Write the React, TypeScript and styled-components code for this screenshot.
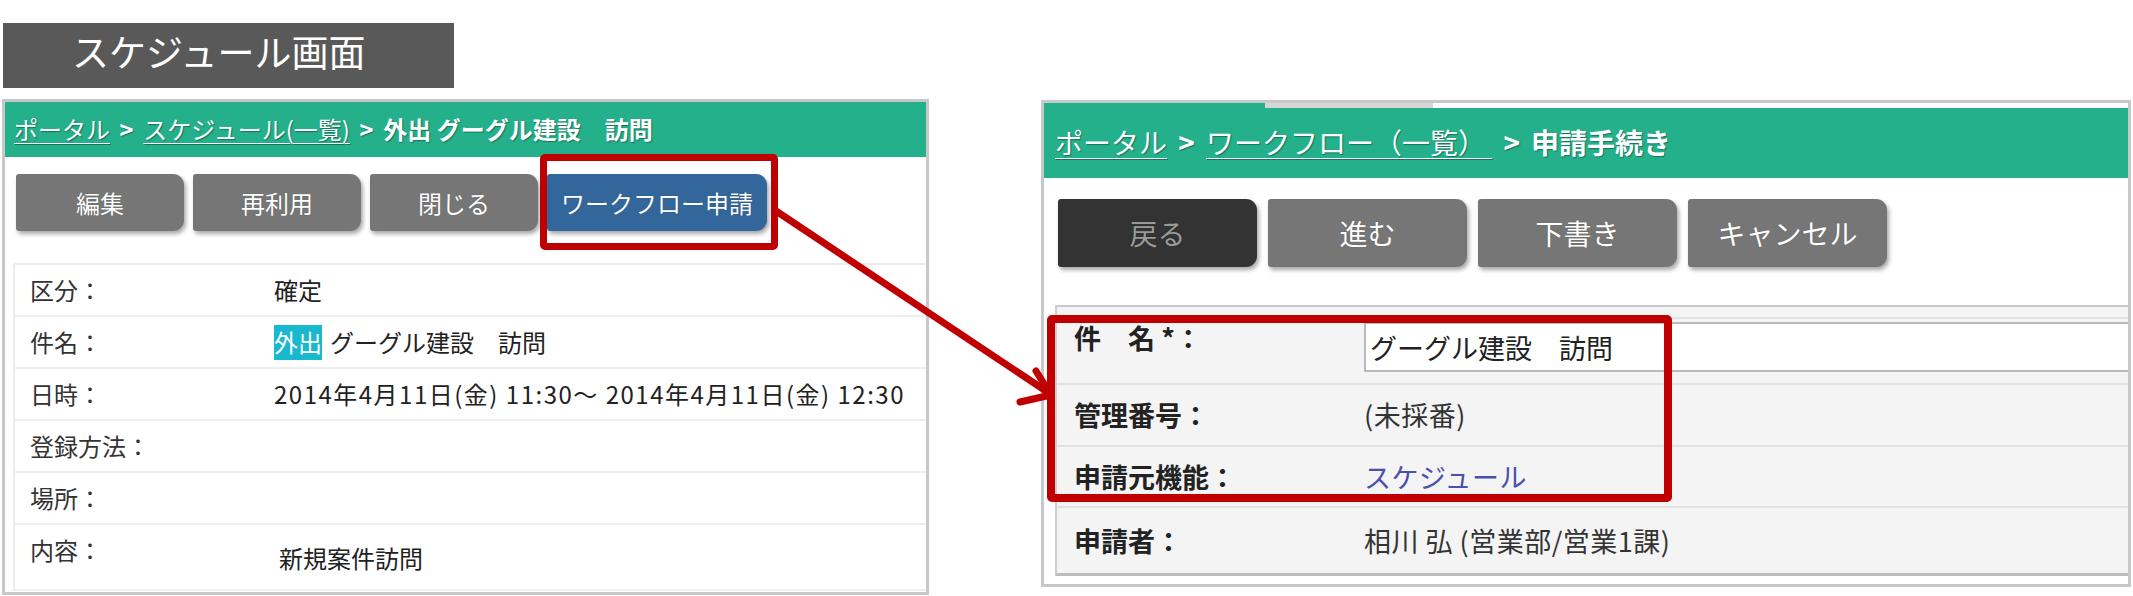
import React from 'react';
import styled, { createGlobalStyle } from 'styled-components';

const GlobalStyle = createGlobalStyle`
  html, body {
    margin: 0;
    padding: 0;
    background: #ffffff;
  }
  body {
    font-family: "Noto Sans CJK JP", "Noto Sans", sans-serif;
    color: #333;
  }
  * {
    box-sizing: border-box;
  }
`;

const Page = styled.div`
  position: relative;
  width: 2133px;
  height: 596px;
  overflow: hidden;
  display: flex;
  align-items: flex-start;
  padding-left: 2px;
  gap: 112px;
`;

const LeftColumn = styled.div`
  display: flex;
  flex-direction: column;
  gap: 11px;
  padding-top: 23px;
`;

const Title = styled.div`
  width: 451px;
  height: 65px;
  margin-left: 1px;
  background: #595959;
  color: #fff;
  font-size: 37px;
  line-height: 1;
  display: flex;
  align-items: center;
  padding: 0 0 8px 69px;
`;

const Panel = styled.section<{ $w: number; $h: number; $top?: number }>`
  width: ${p => p.$w}px;
  height: ${p => p.$h}px;
  margin-top: ${p => p.$top || 0}px;
  border: 3px solid #c8c8c8;
  background: #fff;
  display: flex;
  flex-direction: column;
  overflow: hidden;
`;

// 緑のパンくずヘッダー
const Header = styled.header<{ $h: number }>`
  height: ${p => p.$h}px;
  flex: none;
  background: #23b08a;
  display: flex;
  flex-direction: column;
`;

const TabStrip = styled.div`
  display: flex;
  height: 5px;
  flex: none;
`;

const TabPiece = styled.div<{ $w?: number; $bg: string }>`
  width: ${p => (p.$w ? `${p.$w}px` : 'auto')};
  flex: ${p => (p.$w ? 'none' : '1')};
  background: ${p => p.$bg};
`;

const Crumbs = styled.div<{ $size: number; $pad: number }>`
  flex: 1;
  display: flex;
  align-items: center;
  padding-left: ${p => p.$pad}px;
  font-size: ${p => p.$size}px;
  line-height: 1.2;
  color: #fff;
  white-space: nowrap;
  text-shadow: 1px 1px 1px rgba(0, 0, 0, 0.35);
`;

const CrumbLink = styled.a`
  color: #fff;
  text-decoration: underline;
  text-decoration-thickness: 1px;
  text-underline-offset: 4px;
`;

const CrumbSep = styled.span`
  font-weight: 700;
  margin: 0 0.4em;
`;

const CrumbCurrent = styled.span`
  font-weight: 700;
`;

const Buttons = styled.div<{ $gap: number; $pad: string }>`
  display: flex;
  gap: ${p => p.$gap}px;
  padding: ${p => p.$pad};
  flex: none;
`;

type Tone = 'gray' | 'blue' | 'dark';

const toneBg: Record<Tone, string> = {
  gray: '#767676',
  blue: '#33669a',
  dark: '#333333',
};

const Btn = styled.button<{ $tone: Tone; $w: number; $h: number; $size: number }>`
  width: ${p => p.$w}px;
  height: ${p => p.$h}px;
  border: none;
  border-radius: 3px 11px 11px 3px;
  background: ${p => toneBg[p.$tone]};
  color: ${p => (p.$tone === 'dark' ? '#9a9a9a' : '#fff')};
  font-family: inherit;
  font-size: ${p => p.$size}px;
  line-height: 1;
  padding: 0;
  display: flex;
  align-items: center;
  justify-content: center;
  box-shadow: 2px 3px 4px rgba(0, 0, 0, 0.35);
  text-shadow: 0 0 1px rgba(0, 0, 0, 0.3);
`;

// スケジュール詳細テーブル
const InfoTable = styled.div`
  margin: 32px 0 0 8px;
  border-top: 2px solid #ececec;
  border-left: 2px solid #ececec;
`;

const InfoRow = styled.div<{ $h: number; $top?: boolean }>`
  height: ${p => p.$h}px;
  display: flex;
  align-items: ${p => (p.$top ? 'flex-start' : 'center')};
  border-bottom: 2px solid #efefef;
  font-size: 24px;
  line-height: 34px;
`;

const InfoLabel = styled.div<{ $pt?: number }>`
  width: 259px;
  flex: none;
  padding-left: 15px;
  padding-top: ${p => p.$pt || 0}px;
  color: #333;
`;

const InfoValue = styled.div<{ $pt?: number; $ml?: number; $ls?: number }>`
  display: flex;
  align-items: center;
  gap: 8px;
  color: #222;
  padding-top: ${p => p.$pt || 0}px;
  margin-left: ${p => p.$ml || 0}px;
  letter-spacing: ${p => p.$ls || 0}px;
  white-space: nowrap;
`;

const Tag = styled.span`
  background: #18b8cf;
  color: #fff;
  height: 35px;
  display: inline-flex;
  align-items: center;
  line-height: 1;
`;

// 申請フォーム
const FormTable = styled.div`
  margin: 38px 0 0 11px;
  border-top: 2px solid #c9c9c9;
  border-left: 2px solid #cfcfcf;
  border-bottom: 3px solid #bdbdbd;
  background: #f4f4f4;
`;

const FormCap = styled.div`
  height: 12px;
  border-bottom: 2px solid #e2e2e2;
`;

const FormRow = styled.div<{ $h: number; $top?: boolean; $last?: boolean }>`
  height: ${p => p.$h}px;
  display: flex;
  align-items: ${p => (p.$top ? 'flex-start' : 'center')};
  border-bottom: ${p => (p.$last ? 'none' : '2px solid #e2e2e2')};
  font-size: 27px;
  line-height: 34px;
`;

const FormLabel = styled.div<{ $pt?: number }>`
  width: 307px;
  flex: none;
  padding-left: 17px;
  padding-top: ${p => p.$pt || 0}px;
  font-weight: 700;
  color: #222;
`;

const FormValue = styled.div<{ $link?: boolean }>`
  color: ${p => (p.$link ? '#4b4fae' : '#333')};
  letter-spacing: 0.5px;
  white-space: nowrap;
`;

const TextInput = styled.input`
  flex: 1;
  height: 50px;
  margin-top: 3px;
  border: 2px solid #b9b9b9;
  border-right: none;
  background: #fff;
  font-family: inherit;
  font-size: 27px;
  color: #222;
  padding: 0 0 0 4px;
  outline: none;
`;

// 注釈（赤枠と矢印）
const Callout = styled.div<{ $x: number; $y: number; $w: number; $h: number; $t: number }>`
  position: absolute;
  left: ${p => p.$x}px;
  top: ${p => p.$y}px;
  width: ${p => p.$w}px;
  height: ${p => p.$h}px;
  border: ${p => p.$t}px solid #c00000;
  border-radius: 5px;
  pointer-events: none;
`;

const ArrowLayer = styled.svg`
  position: absolute;
  left: 0;
  top: 0;
  pointer-events: none;
`;

const scheduleButtons = [
  { label: '編集', tone: 'gray' as Tone, w: 168 },
  { label: '再利用', tone: 'gray' as Tone, w: 168 },
  { label: '閉じる', tone: 'gray' as Tone, w: 168 },
  { label: 'ワークフロー申請', tone: 'blue' as Tone, w: 220 },
];

const flowButtons = [
  { label: '戻る', tone: 'dark' as Tone },
  { label: '進む', tone: 'gray' as Tone },
  { label: '下書き', tone: 'gray' as Tone },
  { label: 'キャンセル', tone: 'gray' as Tone },
];

const App: React.FC = () => {
  return (
    <>
      <GlobalStyle />
      <Page>
        <LeftColumn>
          <Title>スケジュール画面</Title>
          <Panel $w={927} $h={496}>
            <Header $h={55}>
              <Crumbs $size={24} $pad={9}>
                <CrumbLink>ポータル</CrumbLink>
                <CrumbSep>&gt;</CrumbSep>
                <CrumbLink>スケジュール(一覧)</CrumbLink>
                <CrumbSep>&gt;</CrumbSep>
                <CrumbCurrent>外出 グーグル建設　訪問</CrumbCurrent>
              </Crumbs>
            </Header>
            <Buttons $gap={9} $pad="17px 0 0 11px">
              {scheduleButtons.map(b => (
                <Btn key={b.label} $tone={b.tone} $w={b.w} $h={57} $size={24}>
                  {b.label}
                </Btn>
              ))}
            </Buttons>
            <InfoTable>
              <InfoRow $h={52}>
                <InfoLabel>区分：</InfoLabel>
                <InfoValue>確定</InfoValue>
              </InfoRow>
              <InfoRow $h={52}>
                <InfoLabel>件名：</InfoLabel>
                <InfoValue>
                  <Tag>外出</Tag>
                  グーグル建設　訪問
                </InfoValue>
              </InfoRow>
              <InfoRow $h={52}>
                <InfoLabel>日時：</InfoLabel>
                <InfoValue $ls={1.5}>2014年4月11日(金) 11:30～ 2014年4月11日(金) 12:30</InfoValue>
              </InfoRow>
              <InfoRow $h={52}>
                <InfoLabel>登録方法：</InfoLabel>
              </InfoRow>
              <InfoRow $h={52}>
                <InfoLabel>場所：</InfoLabel>
              </InfoRow>
              <InfoRow $h={66} $top>
                <InfoLabel $pt={8}>内容：</InfoLabel>
                <InfoValue $pt={16} $ml={5}>新規案件訪問</InfoValue>
              </InfoRow>
            </InfoTable>
          </Panel>
        </LeftColumn>

        <Panel $w={1090} $h={487} $top={100}>
          <Header $h={75}>
            <TabStrip>
              <TabPiece $w={221} $bg="transparent" />
              <TabPiece $w={168} $bg="#d6d6d6" />
              <TabPiece $bg="#ffffff" />
            </TabStrip>
            <Crumbs $size={28} $pad={11}>
              <CrumbLink>ポータル</CrumbLink>
              <CrumbSep>&gt;</CrumbSep>
              <CrumbLink>ワークフロー（一覧）&nbsp;</CrumbLink>
              <CrumbSep>&gt;</CrumbSep>
              <CrumbCurrent>申請手続き</CrumbCurrent>
            </Crumbs>
          </Header>
          <Buttons $gap={11} $pad="21px 0 0 14px">
            {flowButtons.map(b => (
              <Btn key={b.label} $tone={b.tone} $w={199} $h={68} $size={28}>
                {b.label}
              </Btn>
            ))}
          </Buttons>
          <FormTable>
            <FormCap />
            <FormRow $h={66} $top>
              <FormLabel $pt={2}>件　名 *：</FormLabel>
              <TextInput readOnly value="グーグル建設　訪問" />
            </FormRow>
            <FormRow $h={62}>
              <FormLabel>管理番号：</FormLabel>
              <FormValue>(未採番)</FormValue>
            </FormRow>
            <FormRow $h={61}>
              <FormLabel>申請元機能：</FormLabel>
              <FormValue $link>スケジュール</FormValue>
            </FormRow>
            <FormRow $h={65} $last>
              <FormLabel>申請者：</FormLabel>
              <FormValue>相川 弘 (営業部/営業1課)</FormValue>
            </FormRow>
          </FormTable>
        </Panel>

        <Callout $x={540} $y={154} $w={238} $h={96} $t={7} />
        <Callout $x={1047} $y={315} $w={625} $h={187} $t={8} />
        <ArrowLayer width={2133} height={596} viewBox="0 0 2133 596">
          <g stroke="#c00000" strokeWidth={7} strokeLinecap="round" strokeLinejoin="round" fill="none">
            <line x1={776} y1={211} x2={1049} y2={393} />
            <polyline points="1036,371 1051,395 1020,402" />
          </g>
        </ArrowLayer>
      </Page>
    </>
  );
};

export default App;
